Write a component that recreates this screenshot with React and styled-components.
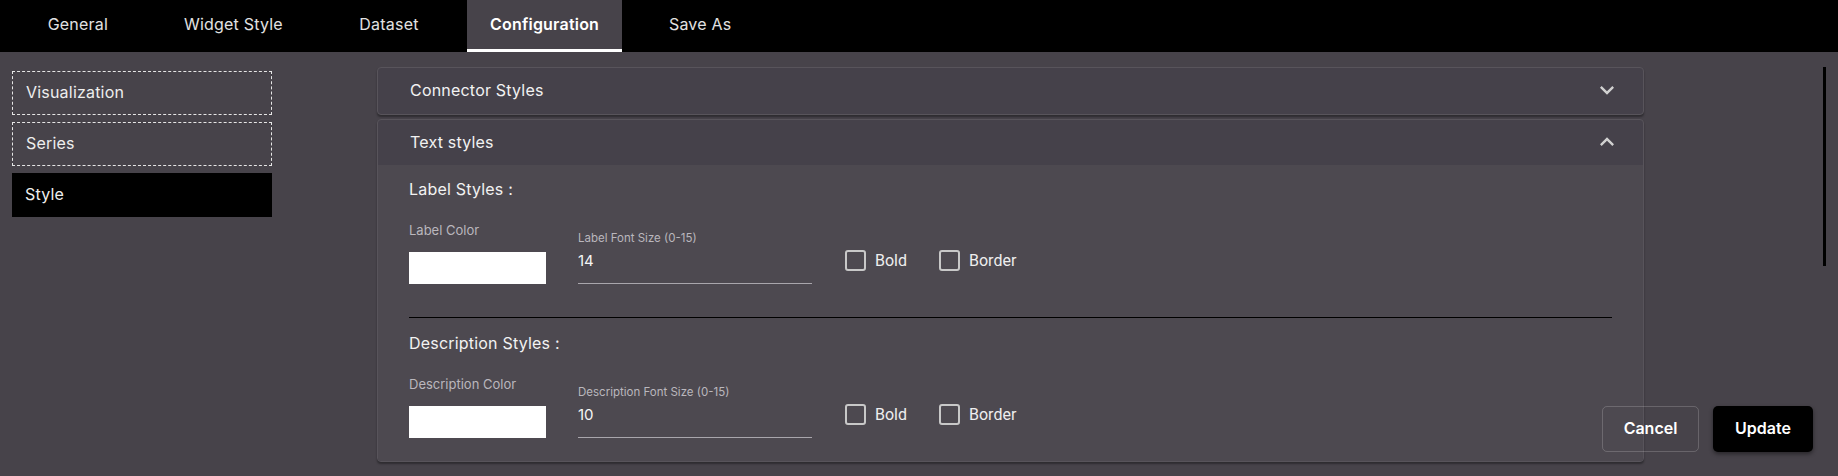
import React, { useState } from 'react';
import styled, { createGlobalStyle } from 'styled-components';

const GlobalStyle = createGlobalStyle`
  html, body {
    margin: 0;
    padding: 0;
    background: #47434a;
    font-family: Inter, "Open Sans", sans-serif;
  }
  * { box-sizing: border-box; }
`;

// Styled Components
const Page = styled.div`
  position: relative;
  height: 100vh;
  overflow: hidden;
  background: #47434a;
  color: #f2f2f2;
`;

const TopBar = styled.div`
  display: flex;
  height: 52px;
  background: #000;
`;

const Tab = styled.div`
  width: 155.6px;
  height: 52px;
  display: flex;
  align-items: center;
  justify-content: center;
  padding-bottom: 2px;
  font-size: 16px;
  letter-spacing: 0.2px;
  color: ${(p) => (p.$active ? '#ffffff' : '#e2e2e2')};
  font-weight: ${(p) => (p.$active ? 600 : 400)};
  background: ${(p) => (p.$active ? '#47434a' : 'transparent')};
  border-bottom: 3px solid ${(p) => (p.$active ? '#ffffff' : 'transparent')};
  cursor: pointer;
`;

const Main = styled.div`
  display: flex;
  align-items: flex-start;
`;

const Sidebar = styled.div`
  width: 260px;
  margin-left: 12px;
  padding-top: 19px;
  display: flex;
  flex-direction: column;
  gap: 7px;
`;

const SideItem = styled.div`
  height: 44px;
  display: flex;
  align-items: center;
  padding: 0 0 2px 13px;
  font-size: 16px;
  letter-spacing: 0.2px;
  color: #eeeeee;
  background: ${(p) => (p.$active ? '#000' : 'transparent')};
  border: ${(p) => (p.$active ? 'none' : '1px dashed #e6e6e6')};
  cursor: pointer;
`;

const Content = styled.div`
  width: 1267px;
  margin-left: 105px;
  padding-top: 15px;
  display: flex;
  flex-direction: column;
  gap: 4px;
`;

const Accordion = styled.div`
  background: #45414a;
  border: 1px solid #58545b;
  border-radius: 4px;
  box-shadow: 0 2px 2px rgba(0, 0, 0, 0.35);
  overflow: hidden;
`;

const Summary = styled.div`
  height: ${(p) => p.$h}px;
  display: flex;
  align-items: center;
  justify-content: space-between;
  padding: 0 22px 2px 32px;
  font-size: 16px;
  letter-spacing: 0.2px;
  color: #f2f2f2;
  cursor: pointer;
`;

const Details = styled.div`
  background: #4d4950;
  padding: 12px 31px 23px 31px;
`;

const Heading = styled.div`
  font-size: 16px;
  line-height: 24px;
  letter-spacing: 0.2px;
  color: #f2f2f2;
`;

const Row = styled.div`
  display: flex;
  align-items: flex-end;
`;

const ColorCol = styled.div`
  width: 137px;
  display: flex;
  flex-direction: column;
`;

const SmallLabel = styled.div`
  margin-top: 19px;
  font-size: 13px;
  line-height: 20px;
  color: #bab7bd;
`;

const Swatch = styled.div`
  margin-top: 12px;
  height: 32px;
  background: ${(p) => p.$color};
`;

const Field = styled.div`
  width: 234px;
  margin-left: 32px;
  display: flex;
  flex-direction: column;
`;

const FieldLabel = styled.div`
  font-size: 11.5px;
  line-height: 18px;
  color: #bab7bd;
`;

const Input = styled.input`
  height: 37px;
  padding: 0 0 9px 0;
  line-height: 28px;
  border: none;
  border-bottom: 1px solid #a9a6ac;
  background: transparent;
  color: #f5f5f5;
  font-family: Inter, "Open Sans", sans-serif;
  font-size: 15px;
  outline: none;
`;

const CheckGroup = styled.div`
  display: flex;
  align-items: center;
  gap: 32px;
  margin-left: 33px;
  margin-bottom: 13px;
`;

const CheckLabel = styled.label`
  display: flex;
  align-items: center;
  gap: 9px;
  font-family: Roboto, sans-serif;
  font-size: 16px;
  color: #eeeeee;
  cursor: pointer;
`;

const Box = styled.span`
  width: 21px;
  height: 21px;
  border: 2.5px solid #c8c8c8;
  border-radius: 3px;
  background: ${(p) => (p.$checked ? '#c8c8c8' : 'transparent')};
`;

const Divider = styled.div`
  height: 1px;
  background: #000;
  margin: 33px 1px 13px 0;
  width: 1203px;
`;

const Scroll = styled.div`
  position: absolute;
  top: 67px;
  right: 12px;
  width: 3px;
  height: 199px;
  background: #000;
`;

const Footer = styled.div`
  position: absolute;
  right: 25px;
  bottom: 24px;
  display: flex;
  align-items: center;
  gap: 14px;
`;

const Button = styled.button`
  height: 46px;
  width: ${(p) => (p.$primary ? 100 : 97)}px;
  padding-bottom: 3px;
  border-radius: 5px;
  font-family: Inter, "Open Sans", sans-serif;
  font-size: 16px;
  font-weight: 600;
  color: #ffffff;
  cursor: pointer;
  background: ${(p) => (p.$primary ? '#000' : 'transparent')};
  border: ${(p) => (p.$primary ? 'none' : '1px solid rgba(255,255,255,0.18)')};
  box-shadow: ${(p) => (p.$primary ? '0 2px 4px rgba(0,0,0,0.45)' : 'none')};
`;

const Chevron = ({ up }) => (
  <svg width="28" height="28" viewBox="0 0 24 24" fill="#d0d0d0">
    {up ? (
      <path d="M7.41 15.41 12 10.83l4.59 4.58L18 14l-6-6-6 6z" />
    ) : (
      <path d="M16.59 8.59 12 13.17 7.41 8.59 6 10l6 6 6-6z" />
    )}
  </svg>
);

const Check = ({ label, checked, onToggle }) => (
  <CheckLabel onClick={onToggle}>
    <Box $checked={checked} />
    {label}
  </CheckLabel>
);

const StyleSection = ({ title, colorLabel, sizeLabel, size, setSize, bold, border, setBold, setBorder }) => (
  <>
    <Heading>{title}</Heading>
    <Row>
      <ColorCol>
        <SmallLabel>{colorLabel}</SmallLabel>
        <Swatch $color="#ffffff" />
      </ColorCol>
      <Field>
        <FieldLabel>{sizeLabel}</FieldLabel>
        <Input value={size} onChange={(e) => setSize(e.target.value)} />
      </Field>
      <CheckGroup>
        <Check label="Bold" checked={bold} onToggle={() => setBold(!bold)} />
        <Check label="Border" checked={border} onToggle={() => setBorder(!border)} />
      </CheckGroup>
    </Row>
  </>
);

const tabs = ['General', 'Widget Style', 'Dataset', 'Configuration', 'Save As'];
const sideItems = ['Visualization', 'Series', 'Style'];

// Main Component
const App = () => {
  const [activeTab, setActiveTab] = useState('Configuration');
  const [activeSide, setActiveSide] = useState('Style');
  const [labelSize, setLabelSize] = useState('14');
  const [descSize, setDescSize] = useState('10');
  const [labelBold, setLabelBold] = useState(false);
  const [labelBorder, setLabelBorder] = useState(false);
  const [descBold, setDescBold] = useState(false);
  const [descBorder, setDescBorder] = useState(false);

  return (
    <Page>
      <GlobalStyle />
      <TopBar>
        {tabs.map((t) => (
          <Tab key={t} $active={t === activeTab} onClick={() => setActiveTab(t)}>
            {t}
          </Tab>
        ))}
      </TopBar>
      <Main>
        <Sidebar>
          {sideItems.map((s) => (
            <SideItem key={s} $active={s === activeSide} onClick={() => setActiveSide(s)}>
              {s}
            </SideItem>
          ))}
        </Sidebar>
        <Content>
          <Accordion>
            <Summary $h={46}>
              Connector Styles
              <Chevron />
            </Summary>
          </Accordion>
          <Accordion>
            <Summary $h={45}>
              Text styles
              <Chevron up />
            </Summary>
            <Details>
              <StyleSection
                title="Label Styles :"
                colorLabel="Label Color"
                sizeLabel="Label Font Size (0-15)"
                size={labelSize}
                setSize={setLabelSize}
                bold={labelBold}
                border={labelBorder}
                setBold={setLabelBold}
                setBorder={setLabelBorder}
              />
              <Divider />
              <StyleSection
                title="Description Styles :"
                colorLabel="Description Color"
                sizeLabel="Description Font Size (0-15)"
                size={descSize}
                setSize={setDescSize}
                bold={descBold}
                border={descBorder}
                setBold={setDescBold}
                setBorder={setDescBorder}
              />
            </Details>
          </Accordion>
        </Content>
      </Main>
      <Scroll />
      <Footer>
        <Button>Cancel</Button>
        <Button $primary>Update</Button>
      </Footer>
    </Page>
  );
};

export default App;
